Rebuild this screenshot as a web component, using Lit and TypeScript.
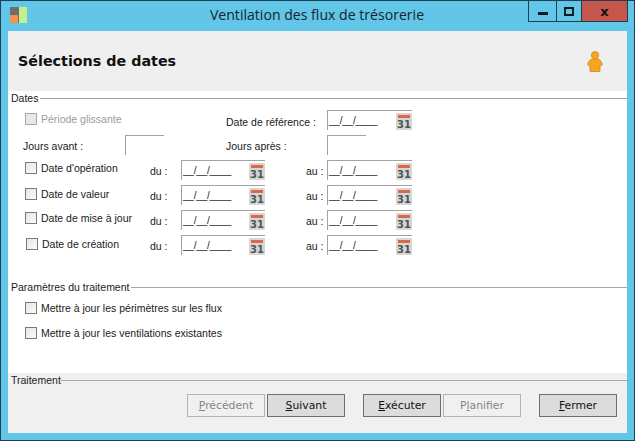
import { LitElement, html, css, svg } from "lit";
import { customElement } from "lit/decorators.js";

const calendar = html`<svg class="cal" width="16" height="17" viewBox="0 0 16 17">
  <rect x="0" y="0" width="16" height="17" rx="1" fill="#d8d6d2"/>
  <rect x="2" y="2" width="12" height="3" fill="#d9694a"/>
  <text x="8" y="14.5" text-anchor="middle" font-family="DejaVu Sans" font-weight="700" font-size="10" fill="#46565a">31</text>
</svg>`;

const person = svg`<svg width="16" height="21" viewBox="0 0 16 21">
  <circle cx="8" cy="4.2" r="3.6" fill="#f7a421" stroke="#c98a2a" stroke-width=".8"/>
  <path d="M4.5 8h7c1.5 .6 3 2.6 4 5.6L13 15v5.5H3V15L.5 13.6C1.5 10.6 3 8.6 4.5 8z" fill="#f9a51f" stroke="#c98a2a" stroke-width=".8"/>
</svg>`;

@customElement("app-root")
export class AppRoot extends LitElement {
  static styles = css`
    :host { display: block; width: 635px; height: 441px; font-family: "Liberation Sans", Arial, sans-serif; font-size: 10.5px; color: #1a1a1a; }
    * { box-sizing: border-box; }
    .win { width: 635px; height: 441px; background: #62c6e9; border: 1px solid #1d4055; display: flex; flex-direction: column; }
    .titlebar { height: 30px; flex: none; display: grid; grid-template-columns: 1fr auto 1fr; padding: 0 6px 0 9px; }
    .appicon { display: block; margin-top: 6px; }
    .title { font-family: "Open Sans", sans-serif; font-size: 14.1px; color: #17242c; line-height: 28px; padding-right: 4px; }
    .controls { justify-self: end; display: flex; height: 21px; border: 1px solid #1d3d50; border-top: 0; }
    .ctl { display: flex; align-items: center; justify-content: center; width: 28px; border-right: 1px solid #1d3d50; }
    .ctl.max { width: 25px; }
    .ctl.close { width: 45px; background: #c4564b; border-right: 0; font: 700 13px "DejaVu Sans", sans-serif; color: #111; }
    .minbar { width: 10px; height: 3px; background: #0d1a22; margin-top: 4px; }
    .maxbox { width: 10px; height: 9px; border: 2px solid #0d1a22; }
    .client { flex: 1; min-height: 0; margin: 0 7px 7px 7px; display: flex; flex-direction: column; background: #fff; }
    .head { height: 60px; flex: none; background: #efefef; display: flex; align-items: center; justify-content: space-between; padding: 0 24px 0 10px; }
    h1 { margin: 0; font: 700 14.3px "DejaVu Sans", sans-serif; color: #111; }
    .legend { display: flex; align-items: center; height: 14px; padding-left: 3px; gap: 2px; color: #222; }
    .legend::after { content: ""; flex: 1; height: 1px; background: #a6a6a6; }
    .dates { height: 189px; flex: none; }
    .grid { display: grid; margin: 5px 0 0 15px; grid-template-columns: 102px 25px 31px 45px 80px 21px 85px; grid-auto-rows: 20px; row-gap: 5px; }
    .check { display: flex; align-items: center; gap: 4px; margin-left: 2px; height: 14px; white-space: nowrap; }
    .check i { width: 12px; height: 12px; flex: none; border: 1px solid #7a7a7a; background: linear-gradient(135deg, #e6e6e6, #fafafa); }
    .check.off { color: #9b9b9b; }
    .check.off i { border-color: #a8a8a8; background: #e8e8e8; }
    .c1 { grid-column: 1 / 3; }
    .t1 { margin-top: 1px; }
    .t2 { margin-top: 2px; }
    .t3 { margin-left: 3px; }
    .lbl { white-space: nowrap; padding-top: 5px; }
    .lbl.ref { padding-top: 6px; }
    .s1 { grid-column: 1 / 5; }
    .s5 { grid-column: 5 / 7; }
    .du { grid-column: 3; }
    .au { grid-column: 6; }
    .field { display: flex; justify-content: space-between; height: 20px; border-top: 1px solid #a2a2a2; border-left: 1px solid #a2a2a2; padding-left: 1px; }
    .f4 { grid-column: 4 / 6; width: 84px; }
    .f7 { grid-column: 7; }
    .short { width: 39px; }
    .mask { font-size: 10px; line-height: 16px; padding-top: 2px; letter-spacing: -.2px; color: #222; }
    .cal { display: block; margin-top: 2px; }
    .params { flex: 1; min-height: 0; }
    .legend.two { margin-bottom: 7px; }
    .opt { margin: 0 0 11px 17px; }
    .foot { height: 60px; flex: none; background: #f0f0f0; }
    .legend.tight { gap: 0; }
    .btns { display: flex; justify-content: flex-end; margin-top: 7px; padding-right: 10px; gap: 2px; }
    button { width: 78px; height: 23px; padding: 0; border: 1px solid #6f6f6f; background: #dcdcdc; font: 10.8px "DejaVu Sans", sans-serif; color: #111; }
    button:disabled { border-color: #b4b4b4; background: #f0f0f0; color: #858585; }
    button u { text-underline-offset: 1px; }
    .sep { margin-right: 16px; }
  `;

  private dateRow(label: string, cls = "") {
    return html`
      <label class="check c1 ${cls}"><i></i>${label}</label>
      <span class="lbl du">du :</span>
      <div class="field f4"><span class="mask">__/__/____</span>${calendar}</div>
      <span class="lbl au">au :</span>
      <div class="field f7"><span class="mask">__/__/____</span>${calendar}</div>`;
  }

  render() {
    return html`<div class="win">
      <div class="titlebar">
        <svg class="appicon" width="17" height="17" viewBox="0 0 17 17">
          <rect width="8" height="8" fill="#6d6d6d"/>
          <rect y="8" width="8" height="8" fill="#f59050"/>
          <rect x="8" width="1" height="16" fill="#55736a"/>
          <rect x="9" width="8" height="16" fill="#c4f08a"/>
        </svg>
        <div class="title">Ventilation des flux de trésorerie</div>
        <div class="controls">
          <div class="ctl"><span class="minbar"></span></div>
          <div class="ctl max"><span class="maxbox"></span></div>
          <div class="ctl close">x</div>
        </div>
      </div>
      <div class="client">
        <header class="head"><h1>Sélections de dates</h1>${person}</header>
        <section class="dates">
          <div class="legend">Dates</div>
          <div class="grid">
            <label class="check off s1 t2"><i></i>Période glissante</label>
            <span class="lbl s5 ref">Date de référence :</span>
            <div class="field f7"><span class="mask">__/__/____</span>${calendar}</div>

            <span class="lbl">Jours avant :</span>
            <div class="field short"></div>
            <span class="lbl s5">Jours après :</span>
            <div class="field short f7"></div>

            ${this.dateRow("Date d'opération", "t1")}
            ${this.dateRow("Date de valeur", "t2")}
            ${this.dateRow("Date de mise à jour", "t1")}
            ${this.dateRow("Date de création", "t2 t3")}
          </div>
        </section>
        <section class="params">
          <div class="legend two">Paramètres du traitement</div>
          <label class="check opt"><i></i>Mettre à jour les périmètres sur les flux</label>
          <label class="check opt"><i></i>Mettre à jour les ventilations existantes</label>
        </section>
        <footer class="foot">
          <div class="legend tight">Traitement</div>
          <div class="btns">
            <button disabled><u>P</u>récédent</button>
            <button class="sep"><u>S</u>uivant</button>
            <button><u>E</u>xécuter</button>
            <button class="sep" disabled>P<u>l</u>anifier</button>
            <button><u>F</u>ermer</button>
          </div>
        </footer>
      </div>
    </div>`;
  }
}
